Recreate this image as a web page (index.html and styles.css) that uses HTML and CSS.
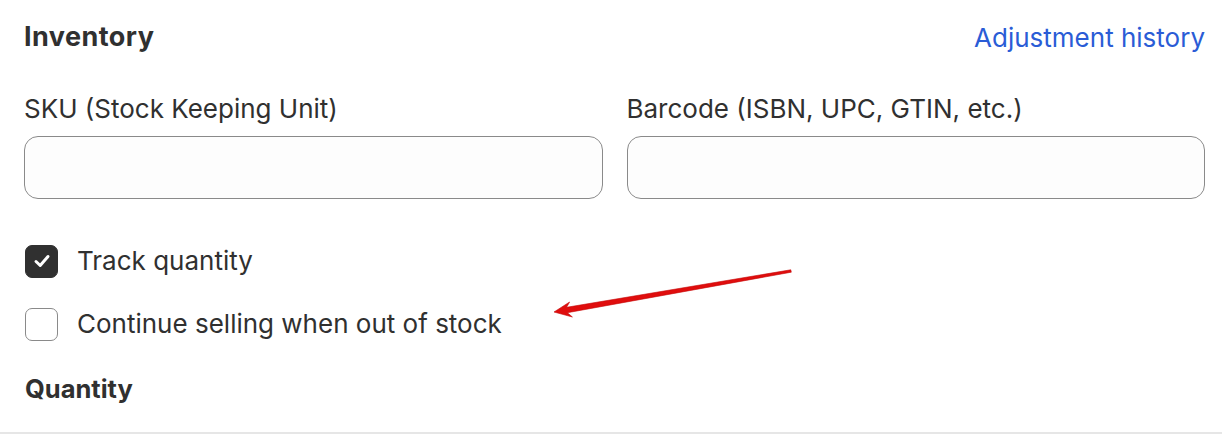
FILE: index.html
```html
<!DOCTYPE html>
<html lang="en">
<head>
<meta charset="utf-8">
<title>Inventory</title>
<link rel="stylesheet" href="styles.css">
</head>
<body>
<div class="card">
  <div class="head">
    <h2 class="title">Inventory</h2>
    <a class="link" href="#">Adjustment history</a>
  </div>
  <div class="fields">
    <div class="field">
      <label class="label">SKU (Stock Keeping Unit)</label>
      <div class="input"></div>
    </div>
    <div class="field">
      <label class="label">Barcode (ISBN, UPC, GTIN, etc.)</label>
      <div class="input"></div>
    </div>
  </div>
  <div class="check first">
    <span class="box checked">
      <svg width="22" height="22" viewBox="0 0 22 22"><path d="M5 11.5 L9.2 15.5 L17 6.5" fill="none" stroke="#fff" stroke-width="3" stroke-linecap="round" stroke-linejoin="round"/></svg>
    </span>
    <span class="check-text">Track quantity</span>
  </div>
  <div class="check second">
    <span class="box"></span>
    <span class="check-text">Continue selling when out of stock</span>
  </div>
  <h3 class="sub">Quantity</h3>
  <div class="rule"></div>
  <svg class="arrow" width="1222" height="434" viewBox="0 0 1222 434">
    <polygon points="554,312 569.6,302 566.6,307.3 790.8,269.8 791.3,272.2 567.4,312.7 572.4,317" fill="#e00d0d" stroke="#c40a0a" stroke-width="0.6" stroke-linejoin="round"/>
  </svg>
</div>
</body>
</html>
```
FILE: styles.css
```css
* { box-sizing: border-box; }
html, body { margin: 0; padding: 0; background: #fff; }
body {
  font-family: Inter, "Noto Sans", "Liberation Sans", sans-serif;
  color: #303030;
  width: 1222px;
  height: 434px;
  overflow: hidden;
}
.card {
  position: relative;
  padding: 24px 17px 0 24px;
  display: flex;
  flex-direction: column;
}
.head {
  display: flex;
  justify-content: space-between;
  align-items: center;
  height: 26px;
}
.title {
  margin: 0;
  font-size: 27px;
  font-weight: 650;
  line-height: 26px;
  letter-spacing: 0.45px;
}
.link {
  color: #2a5cd6;
  text-decoration: none;
  font-size: 26px;
  line-height: 26px;
  margin-top: 1px;
}
.fields {
  display: grid;
  grid-template-columns: 1fr 1fr;
  gap: 24px;
  margin-top: 44px;
}
.field { display: flex; flex-direction: column; }
.label {
  font-size: 26px;
  line-height: 30px;
  height: 30px;
  margin-bottom: 12px;
}
.input {
  height: 63px;
  background: #fdfdfd;
  border: 1px solid #8a8a8a;
  border-radius: 14px;
}
.check {
  display: flex;
  align-items: center;
  gap: 19px;
  height: 34px;
  padding-left: 1px;
}
.check.first { margin-top: 45px; }
.check.second { margin-top: 29px; }
.box {
  width: 33px;
  height: 33px;
  border-radius: 7px;
  border: 1.5px solid #8a8a8a;
  background: #fff;
  display: flex;
  align-items: center;
  justify-content: center;
  flex: none;
}
.box.checked {
  background: #303030;
  border-color: #303030;
}
.check-text {
  font-size: 26px;
  line-height: 30px;
}
.sub {
  margin: 33px 0 0;
  font-size: 25.5px;
  font-weight: 650;
  line-height: 30px;
  height: 30px;
  padding-left: 1px;
}
.rule {
  margin: 28px -17px 0 -24px;
  height: 3px;
  background: #e6e6e6;
}
.arrow {
  position: absolute;
  left: 0;
  top: 0;
  pointer-events: none;
}
```
